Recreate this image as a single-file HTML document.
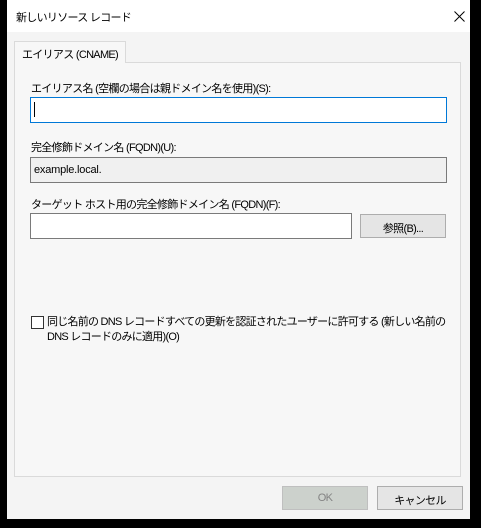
<!DOCTYPE html>
<html><head><meta charset="utf-8"><style>
*{margin:0;padding:0;box-sizing:border-box}
body{width:481px;height:528px;background:#000;position:relative;overflow:hidden;font-family:"Liberation Sans","Noto Sans CJK JP",sans-serif;font-size:11px;color:#000;letter-spacing:-0.7px}
.win{position:absolute;left:7px;top:0;width:463px;height:519px;background:#f4f4f4;overflow:hidden}
.title{position:absolute;left:0;top:0;width:463px;height:32px;background:#fff}
.a{position:absolute;white-space:nowrap}
.box{position:absolute}
</style></head><body>
<div class="win">
<div class="title"></div>
<div class="a" style="left:9px;top:9px">新しいリソース レコード</div>
<svg class="a" style="left:447px;top:11px" width="11" height="11"><path d="M0.5 0.5L10.5 10.5M10.5 0.5L0.5 10.5" stroke="#000" stroke-width="1"/></svg>
<div class="box" style="left:7px;top:62px;width:447px;height:415px;border:1px solid #dadada;background:#f7f7f7"></div>
<div class="box" style="left:7px;top:41px;width:112px;height:22px;border:1px solid #dadada;border-bottom:none;background:#f7f7f7"></div>
<div class="a" style="left:15px;top:46px">エイリアス (CNAME)</div>
<div class="a" style="left:24px;top:80px">エイリアス名 (空欄の場合は親ドメイン名を使用)(S):</div>
<div class="box" style="left:23px;top:97px;width:417px;height:26px;border:1px solid #0078d7;background:#fff"></div>
<div class="box" style="left:27px;top:102px;width:1px;height:15px;background:#000"></div>
<div class="a" style="left:24px;top:139px">完全修飾ドメイン名 (FQDN)(U):</div>
<div class="box" style="left:23px;top:157px;width:417px;height:26px;border:1px solid #7a7a7a;background:#f0f0f0"></div>
<div class="a" style="left:27px;top:164px;letter-spacing:-0.2px">example.local.</div>
<div class="a" style="left:24px;top:196px">ターゲット ホスト用の完全修飾ドメイン名 (FQDN)(F):</div>
<div class="box" style="left:23px;top:213px;width:322px;height:26px;border:1px solid #7a7a7a;background:#fff"></div>
<div class="box" style="left:353px;top:214px;width:86px;height:24px;border:1px solid #adadad;background:#e5e5e5"></div>
<div class="a" style="left:353px;top:220px;width:86px;text-align:center">参照(B)...</div>
<div class="box" style="left:24px;top:316px;width:13px;height:13px;border:1px solid #333;background:#fff"></div>
<div class="a" style="left:40px;top:315px;line-height:15px;letter-spacing:-0.75px">同じ名前の DNS レコードすべての更新を認証されたユーザーに許可する (新しい名前の<br>DNS レコードのみに適用)(O)</div>
<div class="box" style="left:275px;top:486px;width:86px;height:24px;border:1px solid #bfbfbf;background:#ccd1cc"></div>
<div class="a" style="left:275px;top:492px;width:86px;text-align:center;color:#838383">OK</div>
<div class="box" style="left:370px;top:486px;width:86px;height:24px;border:1px solid #adadad;background:#e5e5e5"></div>
<div class="a" style="left:370px;top:492px;width:86px;text-align:center">キャンセル</div>
</div>
</body></html>
